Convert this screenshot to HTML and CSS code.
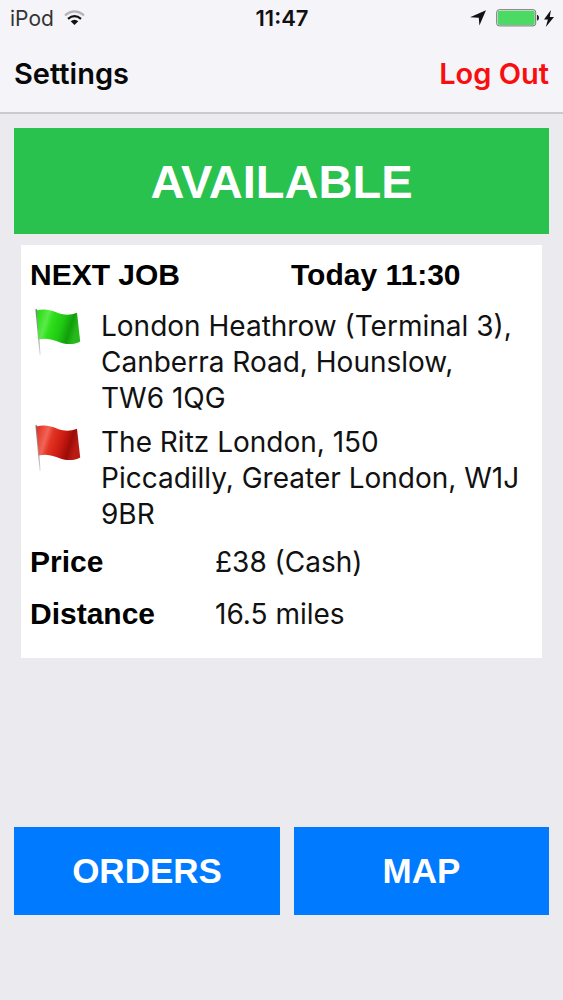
FILE: index.html
```html
<!DOCTYPE html>
<html lang="en">
<head>
<meta charset="utf-8">
<meta name="viewport" content="width=device-width, initial-scale=1">
<title>Next job</title>
<link rel="stylesheet" href="styles.css">
</head>
<body>
<div class="app">
  <header class="top">
    <div class="status">
      <div class="status-side">
        <span class="carrier">iPod</span>
        <svg class="wifi" width="21" height="16" viewBox="0 0 22 16" aria-hidden="true">
          <g fill="none" stroke-width="2.2">
            <path d="M1 5.2Q11-3 21 5.2" stroke="#b5b4b7"/>
            <path d="M4.2 8.9Q11 3.2 17.8 8.9" stroke="#111"/>
          </g>
          <path d="M11 15.4L7 11.4Q11 8.2 15 11.4Z" fill="#111"/>
        </svg>
      </div>
      <time class="clock">11:47</time>
      <div class="status-side status-end">
        <svg width="16" height="16" viewBox="0 0 16 16" aria-hidden="true"><path d="M16 .3L9.4 15.6L8.8 7.8L0 7.2Z" fill="#111"/></svg>
        <div class="power">
          <svg width="43" height="18" viewBox="0 0 43 18" aria-hidden="true">
            <rect x=".7" y=".7" width="39" height="16.2" rx="2.6" fill="#f5f4f8" stroke="#77717a"/>
            <rect x="1.7" y="1.7" width="37" height="14.2" rx="1.6" fill="#4cd964"/>
            <path d="M41 6h.6q1.400.5 1.400 2.800t-1.400 2.800H41z" fill="#222"/>
          </svg>
          <svg width="10" height="17" viewBox="0 0 10 17" aria-hidden="true"><path d="M6.9 0L0 9.5H3.9L1.8 17L10 6.9H5.8Z" fill="#111"/></svg>
        </div>
      </div>
    </div>
    <nav class="nav">
      <button class="nav-btn" type="button">Settings</button>
      <button class="nav-btn nav-logout" type="button">Log Out</button>
    </nav>
  </header>
  <main class="content">
    <button class="available" type="button">AVAILABLE</button>
    <section class="job">
      <div class="job-head">
        <h2 class="job-title">NEXT JOB</h2>
        <time class="job-title">Today 11:30</time>
      </div>
      <div class="stop">
        <svg class="flag" width="46" height="48" viewBox="0 0 46 48" role="img" aria-label="Pick-up">
          <defs>
            <linearGradient id="green" x1="0" y1="0" x2="1" y2=".25">
              <stop offset="0" stop-color="#20d80e"/><stop offset=".28" stop-color="#5bea48"/><stop offset=".4" stop-color="#2fe01c"/><stop offset=".65" stop-color="#1fc911"/><stop offset=".85" stop-color="#129e0c"/><stop offset="1" stop-color="#25b91b"/>
            </linearGradient>
            <linearGradient id="pole" x1="0" y1="0" x2="0" y2="1">
              <stop offset="0" stop-color="#777"/><stop offset=".7" stop-color="#aaa"/><stop offset="1" stop-color="#ddd"/>
            </linearGradient>
          </defs>
          <path d="M.4 1.4L2 1L5.6 46.8L4.6 47Z" fill="url(#pole)"/>
          <path d="M1.6 2.6C9 .4 16 2.2 23 5C30 7.5 36 7 42 4.8L45.2 33.5C38 37.5 30 36.5 22 33.2C15 30.5 9 30 3.8 31.5Z" fill="url(#green)"/>
        </svg>
        <p class="address">London Heathrow (Terminal 3), Canberra Road, Hounslow,<br>TW6 1QG</p>
      </div>
      <div class="stop">
        <svg class="flag" width="46" height="48" viewBox="0 0 46 48" role="img" aria-label="Drop-off">
          <defs>
            <linearGradient id="red" x1="0" y1="0" x2="1" y2=".25">
              <stop offset="0" stop-color="#e32a1c"/><stop offset=".28" stop-color="#ef6557"/><stop offset=".4" stop-color="#e43425"/><stop offset=".65" stop-color="#cc1c12"/><stop offset=".85" stop-color="#9d0c08"/><stop offset="1" stop-color="#b91b14"/>
            </linearGradient>
          </defs>
          <path d="M.4 1.4L2 1L5.6 46.8L4.6 47Z" fill="url(#pole)"/>
          <path d="M1.6 2.6C9 .4 16 2.2 23 5C30 7.5 36 7 42 4.8L45.2 33.5C38 37.5 30 36.5 22 33.2C15 30.5 9 30 3.8 31.5Z" fill="url(#red)"/>
        </svg>
        <p class="address">The Ritz London, 150<br>Piccadilly, Greater London, W1J<br>9BR</p>
      </div>
      <dl class="facts">
        <dt>Price</dt><dd>£38 (Cash)</dd>
        <dt>Distance</dt><dd>16.5 miles</dd>
      </dl>
    </section>
    <div class="actions">
      <button class="action" type="button">ORDERS</button>
      <button class="action" type="button">MAP</button>
    </div>
  </main>
</div>
</body>
</html>
```
FILE: styles.css
```css
* { box-sizing: border-box; }
body {
  margin: 0;
  background: #ebebef;
  color: #111;
  font-family: Inter, "Liberation Sans", sans-serif;
}
button { border: 0; margin: 0; padding: 0; cursor: pointer; }
.app {
  display: flex;
  flex-direction: column;
  min-height: 100vh;
}
.top {
  background: #f5f4f8;
  border-bottom: 2px solid #cbcacd;
}
.status {
  display: flex;
  align-items: center;
  height: 36px;
  padding: 0 9px 0 10px;
}
.status-side {
  display: flex;
  flex: 1;
  align-items: center;
  gap: 10px;
}
.status-end { justify-content: flex-end; }
.power {
  display: flex;
  align-items: center;
  gap: 5px;
}
.carrier { color: #333; font-size: 21px; }
.clock { font-size: 22px; font-weight: 600; }
.nav {
  display: flex;
  justify-content: space-between;
  align-items: center;
  height: 76px;
  padding: 0 14px;
}
.nav-btn {
  background: none;
  color: #080808;
  font: 600 29px/36px Inter, "Liberation Sans", sans-serif;
}
.nav-logout { color: #f80e0e; }
.content {
  display: flex;
  flex: 1;
  flex-direction: column;
  padding: 14px 14px 85px;
}
.available,
.action {
  color: #fff;
  font-family: "Liberation Sans", Arial, sans-serif;
  font-weight: 700;
}
.available {
  height: 106px;
  background: #29c24f;
  font-size: 47px;
}
.job {
  margin: 11px 7px 0;
  padding: 12px 9px 26px;
  background: #fff;
}
.job-head {
  display: grid;
  grid-template-columns: 261fr 242fr;
  margin-bottom: 15px;
}
.job-title {
  margin: 0;
  font: 700 30px/36px "Liberation Sans", Arial, sans-serif;
  color: #000;
}
.stop {
  display: grid;
  grid-template-columns: 46px 1fr;
  column-gap: 20px;
  margin: 0 0 8px 5px;
}
.address {
  margin: 0;
  font-size: 28px;
  line-height: 36px;
}
.facts {
  display: grid;
  grid-template-columns: 185px 1fr;
  row-gap: 16px;
  margin: 12px 0 0;
  font-size: 28px;
  line-height: 36px;
}
.facts dt {
  color: #000;
  font-family: "Liberation Sans", Arial, sans-serif;
  font-size: 30px;
  font-weight: 700;
}
.facts dd { margin: 0; }
.actions {
  display: grid;
  grid-template-columns: 266fr 255fr;
  gap: 14px;
  margin-top: auto;
}
.action {
  height: 88px;
  background: #007aff;
  font-size: 35px;
}
```
